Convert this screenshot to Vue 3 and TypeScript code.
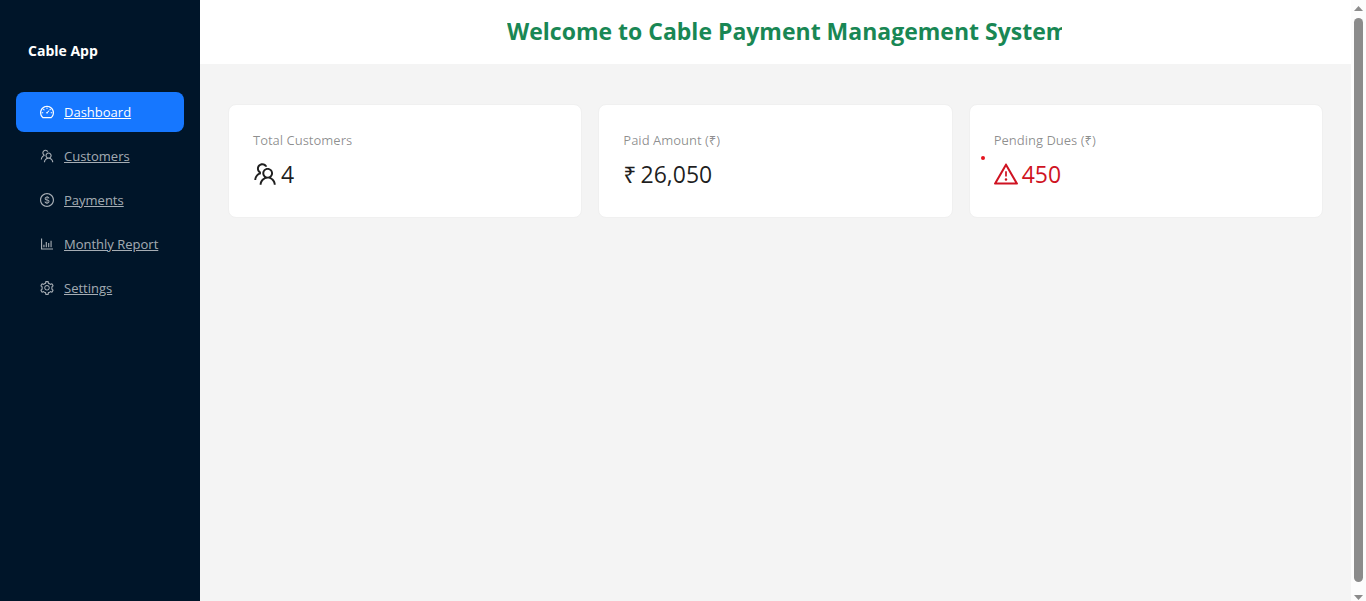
<script setup lang="ts">
interface MenuItem {
  label: string
  icon: string
}

interface Stat {
  title: string
  value: string
  icon?: string
  prefix?: string
  danger?: boolean
}

const teamIcon =
  'M824.2 699.9a301.55 301.55 0 00-86.4-60.4C783.1 602.8 812 546.8 812 484c0-110.8-92.4-201.7-203.2-200-109.1 1.7-197 90.6-197 200 0 62.8 29 118.8 74.2 155.5a300.95 300.95 0 00-86.4 60.4C345 754.6 314 826.8 312 903.8a8 8 0 008 8.2h56c4.3 0 7.9-3.4 8-7.7 1.9-58 25.4-112.3 66.7-153.5A226.62 226.62 0 01612 684c60.9 0 118.2 23.7 161.3 66.8C814.6 792 838 846.3 840 904.3c.1 4.3 3.7 7.7 8 7.7h56a8 8 0 008-8.2c-2-77-33-149.2-87.8-203.9zM612 612c-34.2 0-66.4-13.3-90.5-37.5a126.86 126.86 0 01-37.5-91.8c.3-32.8 13.4-64.5 36.3-88 24-24.6 56.1-38.3 90.4-38.7 33.9-.3 66.8 12.9 91 36.6 24.8 24.3 38.4 56.8 38.4 91.4 0 34.2-13.3 66.3-37.5 90.5A127.3 127.3 0 01612 612zM361.5 510.4c-.9-8.7-1.4-17.5-1.4-26.4 0-15.9 1.5-31.4 4.3-46.5.7-3.6-1.2-7.3-4.5-8.8-13.6-6.1-26.1-14.5-36.9-25.1a127.54 127.54 0 01-38.7-95.4c.9-32.1 13.8-62.6 36.3-85.6 24.7-25.3 57.9-39.1 93.2-38.7 31.9.3 62.7 12.6 86 34.4 7.9 7.4 14.7 15.6 20.4 24.4 2 3.1 5.9 4.4 9.3 3.2 17.6-6.1 36.2-10.4 55.3-12.4 5.6-.6 8.8-6.6 6.3-11.6-32.5-64.3-98.9-108.7-175.7-109.9-110.9-1.7-203.3 89.2-203.3 199.9 0 62.8 28.9 118.8 74.2 155.5-31.8 14.7-61.1 35-86.5 60.4-54.8 54.7-85.8 126.9-87.8 204a8 8 0 008 8.2h56.1c4.3 0 7.9-3.4 8-7.7 1.9-58 25.4-112.3 66.7-153.5 29.4-29.4 65.4-49.8 104.7-59.7 3.9-1 6.5-4.7 6-8.7z'

const menu: MenuItem[] = [
  {
    label: 'Dashboard',
    icon: 'M924.8 385.6a446.7 446.7 0 00-96-142.4 446.7 446.7 0 00-142.4-96C631.1 123.8 572.5 112 512 112s-119.1 11.8-174.4 35.2a446.7 446.7 0 00-142.4 96 446.7 446.7 0 00-96 142.4C75.8 440.9 64 499.5 64 560c0 132.7 58.3 257.7 159.9 343.1l1.7 1.4c5.8 4.8 13.1 7.5 20.6 7.5h531.7c7.5 0 14.8-2.7 20.6-7.5l1.7-1.4C901.7 817.7 960 692.7 960 560c0-60.5-11.9-119.1-35.2-174.4zM761.4 836H262.6A371.12 371.12 0 01140 560c0-99.4 38.7-192.8 109-263 70.3-70.3 163.7-109 263-109 99.4 0 192.8 38.7 263 109 70.3 70.3 109 163.7 109 263 0 105.6-44.5 205.5-122.6 276zM623.5 421.5a8.03 8.03 0 00-11.3 0L527.7 506c-18.7-5-39.4-.2-54.1 14.5a55.95 55.95 0 000 79.2 55.95 55.95 0 0079.2 0 55.87 55.87 0 0014.5-54.1l84.5-84.5c3.1-3.1 3.1-8.2 0-11.3l-28.3-28.3zM490 320h44c4.4 0 8-3.6 8-8v-80c0-4.4-3.6-8-8-8h-44c-4.4 0-8 3.6-8 8v80c0 4.4 3.6 8 8 8zm260 218v44c0 4.4 3.6 8 8 8h80c4.4 0 8-3.6 8-8v-44c0-4.4-3.6-8-8-8h-80c-4.4 0-8 3.6-8 8zm12.7-197.2l-31.1-31.1a8.03 8.03 0 00-11.3 0l-56.6 56.6a8.03 8.03 0 000 11.3l31.1 31.1c3.1 3.1 8.2 3.1 11.3 0l56.6-56.6c3.1-3.1 3.1-8.2 0-11.3zm-458.6-31.1a8.03 8.03 0 00-11.3 0l-31.1 31.1a8.03 8.03 0 000 11.3l56.6 56.6c3.1 3.1 8.2 3.1 11.3 0l31.1-31.1c3.1-3.1 3.1-8.2 0-11.3l-56.6-56.6zM262 530h-80c-4.4 0-8 3.6-8 8v44c0 4.4 3.6 8 8 8h80c4.4 0 8-3.6 8-8v-44c0-4.4-3.6-8-8-8z',
  },
  { label: 'Customers', icon: teamIcon },
  {
    label: 'Payments',
    icon: 'M512 64C264.6 64 64 264.6 64 512s200.6 448 448 448 448-200.6 448-448S759.4 64 512 64zm0 820c-205.4 0-372-166.6-372-372s166.6-372 372-372 372 166.6 372 372-166.6 372-372 372zm47.7-395.2l-25.4-5.9V348.6c38 5.2 61.5 29 65.5 58.2.5 4 3.9 6.9 7.9 6.9h44.9c4.7 0 8.4-4.1 8-8.8-6.1-62.3-57.4-102.3-125.9-109.2V263c0-4.4-3.6-8-8-8h-28.1c-4.4 0-8 3.6-8 8v33c-70.8 6.9-126.2 46-126.2 119 0 67.6 49.8 100.2 102.1 112.7l24.7 6.3v142.7c-44.2-5.9-69-29.5-74.1-61.3-.6-3.8-4-6.6-7.9-6.6H363c-4.7 0-8.4 4-8 8.7 4.5 55 46.2 105.6 135.2 112.1V761c0 4.4 3.6 8 8 8h28.4c4.4 0 8-3.6 8-8.1l-.2-31.7c78.3-6.9 134.3-48.8 134.3-124-.1-69.4-44.2-100.4-109-116.4zm-68.6-16.2c-5.6-1.6-10.3-3.1-15-5-33.8-12.2-49.5-31.9-49.5-57.3 0-36.3 27.5-57 64.5-61.7v124zM534.3 677V543.3c3.1.9 5.9 1.6 8.8 2.2 47.3 14.4 63.2 34.4 63.2 65.1 0 39.1-29.4 62.6-72 66.4z',
  },
  {
    label: 'Monthly Report',
    icon: 'M888 792H200V168c0-4.4-3.6-8-8-8h-56c-4.4 0-8 3.6-8 8v688c0 4.4 3.6 8 8 8h752c4.4 0 8-3.6 8-8v-56c0-4.4-3.6-8-8-8zm-600-80h56c4.4 0 8-3.6 8-8V560c0-4.4-3.6-8-8-8h-56c-4.4 0-8 3.6-8 8v144c0 4.4 3.6 8 8 8zm152 0h56c4.4 0 8-3.6 8-8V384c0-4.4-3.6-8-8-8h-56c-4.4 0-8 3.6-8 8v320c0 4.4 3.6 8 8 8zm152 0h56c4.4 0 8-3.6 8-8V462c0-4.4-3.6-8-8-8h-56c-4.4 0-8 3.6-8 8v242c0 4.4 3.6 8 8 8zm152 0h56c4.4 0 8-3.6 8-8V304c0-4.4-3.6-8-8-8h-56c-4.4 0-8 3.6-8 8v400c0 4.4 3.6 8 8 8z',
  },
  {
    label: 'Settings',
    icon: 'M924.8 625.7l-65.5-56c3.1-19 4.7-38.4 4.7-57.8s-1.6-38.8-4.7-57.8l65.5-56a32.03 32.03 0 009.3-35.2l-.9-2.6a443.74 443.74 0 00-79.7-137.9l-1.8-2.1a32.12 32.12 0 00-35.1-9.5l-81.3 28.9c-30-24.6-63.5-44-99.7-57.6l-15.7-85a32.05 32.05 0 00-25.8-25.7l-2.7-.5c-52.1-9.4-106.9-9.4-159 0l-2.7.5a32.05 32.05 0 00-25.8 25.7l-15.8 85.4a351.86 351.86 0 00-99 57.4l-81.9-29.1a32 32 0 00-35.1 9.5l-1.8 2.1a446.02 446.02 0 00-79.7 137.9l-.9 2.6c-4.5 12.5-.8 26.5 9.3 35.2l66.3 56.6c-3.1 18.8-4.6 38-4.6 57.1 0 19.2 1.5 38.4 4.6 57.1L99 625.5a32.03 32.03 0 00-9.3 35.2l.9 2.6c18.1 50.4 44.9 96.9 79.7 137.9l1.8 2.1a32.12 32.12 0 0035.1 9.5l81.9-29.1c29.8 24.5 63.1 43.9 99 57.4l15.8 85.4a32.05 32.05 0 0025.8 25.7l2.7.5a449.4 449.4 0 00159 0l2.7-.5a32.05 32.05 0 0025.8-25.7l15.7-85a350 350 0 0099.7-57.6l81.3 28.9a32 32 0 0035.1-9.5l1.8-2.1c34.8-41.1 61.6-87.5 79.7-137.9l.9-2.6c4.5-12.3.8-26.3-9.3-35zM788.3 465.9c2.5 15.1 3.8 30.6 3.8 46.1s-1.3 31-3.8 46.1l-6.6 40.1 74.7 63.9a370.03 370.03 0 01-42.6 73.6L721 702.8l-31.4 25.8c-23.9 19.6-50.5 35-79.3 45.8l-38.1 14.3-17.9 97a377.5 377.5 0 01-85 0l-17.9-97.2-37.8-14.5c-28.5-10.8-55-26.2-78.7-45.7l-31.4-25.9-93.4 33.2c-17-22.9-31.2-47.6-42.6-73.6l75.5-64.5-6.5-40c-2.4-14.9-3.7-30.3-3.7-45.5 0-15.3 1.2-30.6 3.7-45.5l6.5-40-75.5-64.5c11.3-26.1 25.6-50.7 42.6-73.6l93.4 33.2 31.4-25.9c23.7-19.5 50.2-34.9 78.7-45.7l37.9-14.3 17.9-97.2c28.1-3.2 56.8-3.2 85 0l17.9 97 38.1 14.3c28.7 10.8 55.4 26.2 79.3 45.8l31.4 25.8 92.8-32.9c17 22.9 31.2 47.6 42.6 73.6L781.8 426l6.5 39.9zM512 326c-97.2 0-176 78.8-176 176s78.8 176 176 176 176-78.8 176-176-78.8-176-176-176zm79.2 255.2A111.6 111.6 0 01512 614c-29.9 0-58-11.7-79.2-32.8A111.6 111.6 0 01400 502c0-29.9 11.7-58 32.8-79.2C454 401.6 482.1 390 512 390c29.9 0 58 11.6 79.2 32.8A111.6 111.6 0 01624 502c0 29.9-11.7 58-32.8 79.2z',
  },
]

const stats: Stat[] = [
  { title: 'Total Customers', value: '4', icon: teamIcon },
  { title: 'Paid Amount (₹)', value: '26,050', prefix: '₹' },
  {
    title: 'Pending Dues (₹)',
    value: '450',
    danger: true,
    icon: 'M464 720a48 48 0 1096 0 48 48 0 10-96 0zm16-304v184c0 4.4 3.6 8 8 8h48c4.4 0 8-3.6 8-8V416c0-4.4-3.6-8-8-8h-48c-4.4 0-8 3.6-8 8zm475.7 440l-416-720c-6.2-10.7-16.9-16-27.7-16s-21.6 5.3-27.7 16l-416 720C56 877.4 71.4 904 96 904h832c24.6 0 40-26.6 27.7-48zm-783.5-27.9L512 239.9l339.8 588.2H172.2z',
  },
]

const active = 'Dashboard'
</script>

<template>
  <div class="layout">
    <aside class="sider">
      <div class="brand">Cable App</div>
      <nav class="menu">
        <a
          v-for="item in menu"
          :key="item.label"
          href="#"
          class="menu-item"
          :class="{ active: item.label === active }"
        >
          <svg class="menu-icon" viewBox="64 64 896 896" aria-hidden="true"><path :d="item.icon" /></svg>
          <span class="menu-label">{{ item.label }}</span>
        </a>
      </nav>
    </aside>

    <div class="main">
      <header class="header">
        <h1 class="welcome">Welcome to Cable Payment Management System</h1>
      </header>
      <main class="content">
        <section v-for="stat in stats" :key="stat.title" class="card" :class="{ danger: stat.danger }">
          <div class="card-title">{{ stat.title }}</div>
          <div class="card-value">
            <svg v-if="stat.icon" class="card-icon" viewBox="64 64 896 896" aria-hidden="true"><path :d="stat.icon" /></svg>
            <span v-else>{{ stat.prefix }}</span>
            <span>{{ stat.value }}</span>
          </div>
          <i v-if="stat.danger" class="dot"></i>
        </section>
      </main>
    </div>

    <div class="scrollbar" aria-hidden="true">
      <svg class="arrow" viewBox="0 0 9 5"><path d="M4.5 0 9 5H0z" /></svg>
      <div class="thumb"></div>
      <svg class="arrow" viewBox="0 0 9 5"><path d="M0 0h9L4.5 5z" /></svg>
    </div>
  </div>
</template>

<style>
body {
  margin: 0;
}
</style>

<style scoped>
.layout {
  display: flex;
  min-height: 100vh;
  background: #f4f4f4;
  font-family: 'Segoe UI', 'Open Sans', 'Noto Sans', sans-serif;
  font-size: 13px;
  line-height: 22px;
}

.sider {
  flex: none;
  width: 200px;
  background: #001529;
}

.brand {
  padding: 40px 28px 26px;
  color: #fff;
  font-size: 14px;
  font-weight: 700;
}

.menu {
  display: flex;
  flex-direction: column;
  gap: 4px;
  padding: 4px 16px;
}

.menu-item {
  display: flex;
  align-items: center;
  gap: 10px;
  height: 40px;
  padding: 0 24px;
  border-radius: 8px;
  color: rgba(255, 255, 255, 0.65);
  white-space: nowrap;
}

.menu-item.active {
  background: #1677ff;
  color: #fff;
}

.menu-icon {
  flex: none;
  width: 14px;
  height: 14px;
  fill: currentColor;
}

.main {
  flex: 1;
  min-width: 0;
}

.header {
  display: flex;
  justify-content: center;
  height: 64px;
  padding-left: 18px;
  background: #fff;
}

.welcome {
  max-width: 555px;
  margin: 0;
  overflow: hidden;
  color: #198754;
  font-size: 23px;
  font-weight: 700;
  line-height: 62px;
  white-space: nowrap;
}

.content {
  display: grid;
  grid-template-columns: repeat(3, 1fr);
  gap: 16px;
  padding: 40px 28px;
}

.card {
  position: relative;
  padding: 24px;
  border: 1px solid #f0f0f0;
  border-radius: 8px;
  background: #fff;
  color: rgba(0, 0, 0, 0.88);
}

.card-title {
  margin-bottom: 4px;
  color: rgba(0, 0, 0, 0.45);
}

.card-value {
  display: flex;
  align-items: center;
  gap: 4px;
  font-size: 23px;
  line-height: 38px;
}

.card-icon {
  width: 24px;
  height: 24px;
  fill: currentColor;
}

.danger .card-value {
  color: #cf1322;
}

.dot {
  position: absolute;
  top: 51px;
  left: 11px;
  width: 4px;
  height: 4px;
  border-radius: 50%;
  background: #e5141e;
}

.scrollbar {
  display: flex;
  flex: 0 0 15px;
  flex-direction: column;
  align-items: center;
  gap: 7px;
  box-sizing: border-box;
  padding: 6px 0 1px;
  background: #fcfcfc;
}

.arrow {
  width: 9px;
  height: 5px;
  fill: #8b8b8b;
}

.thumb {
  flex: 1;
  width: 9px;
  margin-bottom: 6px;
  border-radius: 5px;
  background: #8b8b8b;
}
</style>
